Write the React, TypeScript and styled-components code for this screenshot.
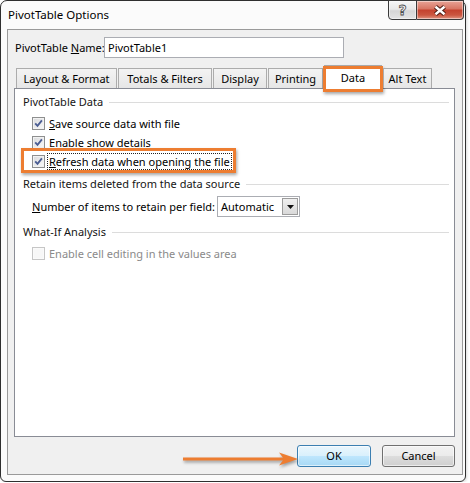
import React from "react";
import styled, { createGlobalStyle } from "styled-components";

const GlobalStyle = createGlobalStyle`
  html, body { margin: 0; padding: 0; background: #ffffff; }
  body {
    font-family: "Noto Sans", "Segoe UI", sans-serif;
    font-size: 11px;
    color: #000;
  }
  * { box-sizing: border-box; }
`;

const Window = styled.div`
  position: relative;
  width: 466px;
  height: 482px;
  border: 1px solid #2f2f2f;
  border-radius: 7px 7px 6px 6px;
  background: #fbfbfb;
  display: flex;
  flex-direction: column;
  box-shadow: 1px 1px 3px rgba(0, 0, 0, 0.15);
`;

const TitleBar = styled.div`
  height: 28px;
  display: flex;
  align-items: flex-start;
  padding-left: 7px;
`;

const Title = styled.div`
  line-height: 28px;
  font-size: 11.5px;
  color: #000;
`;

const Controls = styled.div`
  margin-left: auto;
  margin-top: -1px;
  margin-right: 1px;
  display: flex;
`;

const CaptionButton = styled.div<{ $kind: "help" | "close" }>`
  width: ${(p) => (p.$kind === "help" ? 29 : 47)}px;
  height: 20px;
  border: 1px solid #3a3a3a;
  border-left: ${(p) => (p.$kind === "close" ? "none" : "1px solid #3a3a3a")};
  border-radius: ${(p) => (p.$kind === "help" ? "0 0 0 4px" : "0 0 4px 0")};
  display: flex;
  align-items: center;
  justify-content: center;
  background: ${(p) =>
    p.$kind === "help"
      ? "linear-gradient(#f6f6f6 0%, #e8e8e8 45%, #d6d6d6 55%, #e4e4e4 100%)"
      : "linear-gradient(#e8a396 0%, #d87765 42%, #c5432f 52%, #cb563f 78%, #e19582 100%)"};
  box-shadow: inset 0 0 0 1px rgba(255, 255, 255, 0.45);
`;

const HelpGlyph = styled.span`
  font-family: "DejaVu Sans", sans-serif;
  font-weight: bold;
  font-size: 14px;
  line-height: 14px;
  color: #f4f4f4;
  -webkit-text-stroke: 0.8px #4d4d4d;
`;

const Client = styled.div`
  flex: 1;
  margin: 0 2px 6px 6px;
  border: 1px solid #9a9a9a;
  background: #f0f0f0;
  display: flex;
  flex-direction: column;
  padding: 7px 7px 7px 6px;
`;

const NameRow = styled.div`
  display: flex;
  align-items: center;
  height: 21px;
  padding-left: 1px;
`;

const NameLabel = styled.label`
  width: 89px;
  white-space: nowrap;
`;

const TextBox = styled.div`
  width: 240px;
  height: 21px;
  border: 1px solid #abadb3;
  background: #fff;
  padding: 0 3px;
  line-height: 19px;
`;

const TabStrip = styled.div`
  margin-top: 7px;
  height: 23px;
  display: flex;
  align-items: flex-end;
  gap: 1px;
  padding-left: 2px;
  position: relative;
  z-index: 1;
`;

const Tab = styled.div<{ $w: number; $active?: boolean }>`
  position: relative;
  width: ${(p) => p.$w}px;
  height: ${(p) => (p.$active ? 24 : 20)}px;
  margin-bottom: ${(p) => (p.$active ? -1 : 0)}px;
  border: 1px solid #acacac;
  border-bottom: none;
  background: ${(p) =>
    p.$active ? "#ffffff" : "linear-gradient(#f3f3f3, #e6e6e6)"};
  text-align: center;
  line-height: ${(p) => (p.$active ? 23 : 19)}px;
  white-space: nowrap;
`;

const TabCallout = styled.div`
  position: absolute;
  left: -2px;
  right: -2px;
  top: 0;
  bottom: -3px;
  border: 3px solid #ed7d31;
  box-shadow: 1px 2px 3px rgba(0, 0, 0, 0.35);
  pointer-events: none;
`;

const Panel = styled.div`
  flex: 1;
  background: #fff;
  border: 1px solid #898c95;
  padding: 5px 5px 0 8px;
  display: flex;
  flex-direction: column;
`;

const Group = styled.div`
  display: flex;
  flex-direction: column;
  margin-bottom: 5px;
`;

const GroupHeader = styled.div`
  height: 16px;
  line-height: 16px;
  display: flex;
  align-items: center;
  color: #151515;
  &::after {
    content: "";
    flex: 1;
    height: 1px;
    margin-left: 6px;
    background: #dcdcdc;
  }
`;

const GroupBody = styled.div`
  padding: 4px 0 0 9px;
  display: flex;
  flex-direction: column;
`;

const CheckRow = styled.div`
  position: relative;
  align-self: flex-start;
  height: 19px;
  display: flex;
  align-items: center;
`;

const Box = styled.span<{ $disabled?: boolean }>`
  width: 13px;
  height: 13px;
  border: 1px solid ${(p) => (p.$disabled ? "#c6c6c6" : "#8e8f8f")};
  background: ${(p) =>
    p.$disabled ? "#f7f7f7" : "linear-gradient(135deg, #d9dadc, #f9f9f9)"};
  box-shadow: inset 0 0 0 1px ${(p) => (p.$disabled ? "#fafafa" : "#f2f2f2")};
  display: flex;
  align-items: center;
  justify-content: center;
`;

const CheckLabel = styled.span<{ $focus?: boolean; $disabled?: boolean }>`
  margin-left: 2px;
  padding: 0 1px;
  line-height: 15px;
  border: 1px dotted ${(p) => (p.$focus ? "#222" : "transparent")};
  color: ${(p) => (p.$disabled ? "#8a8a8a" : "#000")};
  white-space: nowrap;
`;

const RowCallout = styled.div`
  position: absolute;
  left: -11px;
  right: -4px;
  top: -4px;
  bottom: -2px;
  border: 3px solid #ed7d31;
  box-shadow: 1px 2px 3px rgba(0, 0, 0, 0.35);
  pointer-events: none;
`;

const FieldRow = styled.div`
  display: flex;
  align-items: center;
  height: 21px;
  margin-bottom: 2px;
`;

const FieldLabel = styled.label`
  width: 185px;
  white-space: nowrap;
`;

const Select = styled.div`
  width: 83px;
  height: 21px;
  border: 1px solid #abadb3;
  background: #fff;
  display: flex;
  padding: 1px;
`;

const SelectText = styled.span`
  flex: 1;
  padding-left: 2px;
  line-height: 17px;
`;

const DropButton = styled.span`
  width: 16px;
  border: 1px solid #9c9c9c;
  background: linear-gradient(#f0f0f0, #d9d9d9);
  display: flex;
  align-items: center;
  justify-content: center;
`;

const ButtonRow = styled.div`
  position: relative;
  margin-top: 8px;
  display: flex;
  justify-content: flex-end;
  gap: 11px;
`;

const DialogButton = styled.div<{ $primary?: boolean; $w: number }>`
  width: ${(p) => p.$w}px;
  height: 22px;
  border: 1px solid ${(p) => (p.$primary ? "#3c7fb1" : "#707070")};
  border-radius: 3px;
  background: ${(p) =>
    p.$primary
      ? "linear-gradient(#eaf6fd 0%, #d9f0fc 50%, #bee6fd 51%, #a7d9f5 100%)"
      : "linear-gradient(#f2f2f2 0%, #ebebeb 50%, #dddddd 51%, #cfcfcf 100%)"};
  box-shadow: inset 0 0 0 1px rgba(255, 255, 255, 0.6);
  text-align: center;
  line-height: 20px;
`;

const Arrow = styled.svg`
  position: absolute;
  left: 164px;
  top: 2px;
  overflow: visible;
  filter: drop-shadow(1px 2px 1.5px rgba(0, 0, 0, 0.35));
`;

const tabs = [
  { label: "Layout & Format", w: 101 },
  { label: "Totals & Filters", w: 94 },
  { label: "Display", w: 54 },
  { label: "Printing", w: 55 },
  { label: "Data", w: 58, active: true },
  { label: "Alt Text", w: 49 },
];

const CheckMark = () => (
  <svg width="11" height="11" viewBox="0 0 11 11">
    <path
      d="M2.2 5.4 L4.5 7.9 L8.9 2.4"
      fill="none"
      stroke="#4a5c92"
      strokeWidth="1.8"
      strokeLinejoin="miter"
    />
  </svg>
);

type CheckProps = {
  checked?: boolean;
  disabled?: boolean;
  focus?: boolean;
  callout?: boolean;
  accel?: string;
  rest: string;
};

const Check = ({ checked, disabled, focus, callout, accel, rest }: CheckProps) => (
  <CheckRow>
    <Box $disabled={disabled}>{checked && <CheckMark />}</Box>
    <CheckLabel $focus={focus} $disabled={disabled}>
      {accel && <u>{accel}</u>}
      {rest}
    </CheckLabel>
    {callout && <RowCallout />}
  </CheckRow>
);

export default function App() {
  return (
    <>
      <GlobalStyle />
      <Window>
        <TitleBar>
          <Title>PivotTable Options</Title>
          <Controls>
            <CaptionButton $kind="help">
              <HelpGlyph>?</HelpGlyph>
            </CaptionButton>
            <CaptionButton $kind="close">
              <svg width="14" height="11" viewBox="0 0 14 11">
                <path d="M2.5 1.8 L11.5 9.2 M11.5 1.8 L2.5 9.2" stroke="#4a1a12" strokeWidth="4.4" />
                <path d="M2.5 1.8 L11.5 9.2 M11.5 1.8 L2.5 9.2" stroke="#ffffff" strokeWidth="2.4" />
              </svg>
            </CaptionButton>
          </Controls>
        </TitleBar>
        <Client>
          <NameRow>
            <NameLabel>
              PivotTable <u>N</u>ame:
            </NameLabel>
            <TextBox>PivotTable1</TextBox>
          </NameRow>
          <TabStrip>
            {tabs.map((t) => (
              <Tab key={t.label} $w={t.w} $active={t.active}>
                {t.label}
                {t.active && <TabCallout />}
              </Tab>
            ))}
          </TabStrip>
          <Panel>
            <Group>
              <GroupHeader>PivotTable Data</GroupHeader>
              <GroupBody>
                <Check checked accel="S" rest="ave source data with file" />
                <Check checked accel="E" rest="nable show details" />
                <Check checked focus callout accel="R" rest="efresh data when opening the file" />
              </GroupBody>
            </Group>
            <Group>
              <GroupHeader>Retain items deleted from the data source</GroupHeader>
              <GroupBody>
                <FieldRow>
                  <FieldLabel>
                    <u>N</u>umber of items to retain per field:
                  </FieldLabel>
                  <Select>
                    <SelectText>Automatic</SelectText>
                    <DropButton>
                      <svg width="7" height="4" viewBox="0 0 7 4">
                        <path d="M0 0 H7 L3.5 4 Z" fill="#111" />
                      </svg>
                    </DropButton>
                  </Select>
                </FieldRow>
              </GroupBody>
            </Group>
            <Group>
              <GroupHeader>What-If Analysis</GroupHeader>
              <GroupBody>
                <Check disabled rest="Enable cell editing in the values area" />
              </GroupBody>
            </Group>
          </Panel>
          <ButtonRow>
            <Arrow width="122" height="24" viewBox="0 0 122 24">
              <path d="M5 12 H108" stroke="#ed7d31" strokeWidth="3" />
              <path d="M120 12 L101 5.5 L106 12 L101 18.5 Z" fill="#ed7d31" />
            </Arrow>
            <DialogButton $primary $w={74}>OK</DialogButton>
            <DialogButton $w={73}>Cancel</DialogButton>
          </ButtonRow>
        </Client>
      </Window>
    </>
  );
}
